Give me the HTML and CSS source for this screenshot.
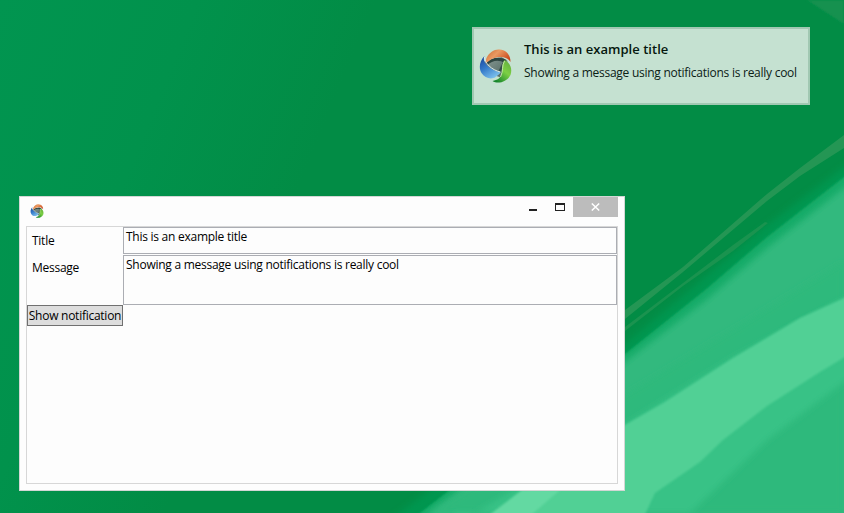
FILE: index.html
```html
<!DOCTYPE html>
<html lang="en">
<head>
<meta charset="utf-8">
<title>Notifications</title>
<link rel="stylesheet" href="styles.css">
</head>
<body>
<svg width="0" height="0" class="defs" aria-hidden="true">
  <defs>
    <linearGradient id="orange" x1="0" y1="0" x2="1" y2="0.6"><stop offset="0" stop-color="#c9682f"/><stop offset=".45" stop-color="#eb9a62"/><stop offset="1" stop-color="#c8441a"/></linearGradient>
    <linearGradient id="blue" x1="0" y1="0" x2=".6" y2="1"><stop offset="0" stop-color="#173f94"/><stop offset=".5" stop-color="#3278c8"/><stop offset="1" stop-color="#79bdeb"/></linearGradient>
    <linearGradient id="green" x1="1" y1="0" x2=".3" y2="1"><stop offset="0" stop-color="#5fa83c"/><stop offset=".5" stop-color="#7dd044"/><stop offset="1" stop-color="#16862c"/></linearGradient>
    <linearGradient id="core" x1="0" y1="0" x2="1" y2="1"><stop offset="0" stop-color="#8b9c97"/><stop offset="1" stop-color="#4a625c"/></linearGradient>
    <symbol id="logo" viewBox="0 0 32 34">
      <path d="M5 12 22 8 28 12 23 29 17 27 5 17Z" fill="url(#core)"/>
      <path d="M6 14C11 9 20 7 27 11L25 14C19 10 12 12 8 16Z" fill="#2f4541"/>
      <path d="M24 12 22 24 19 22Z" fill="#344d46"/>
      <path d="M7 9C10 3 15 0 20 0.5 27 1 31 6 31 13 28 8 21 7 15 9 11 10 8 13 6 15 6 13 6 11 7 9Z" fill="url(#orange)"/>
      <path d="M5 7C0 12-1 19 2 24 5 29 12 31 16 28 19 26 21 24 21 23 14 22 8 18 6 14 4 12 4 9 5 7Z" fill="url(#blue)"/>
      <path d="M5 8C5 14 12 21 21 23" fill="none" stroke="#dcebed" stroke-width="1"/>
      <path d="M25 11C31 14 33 20 31 26 28 32 19 36 13 32 18 31 21 29 22 25 23 20 22 15 25 11Z" fill="url(#green)"/>
      <path d="M25 12C22 17 24 22 21 28" fill="none" stroke="#cdeab4" stroke-width=".9"/>
    </symbol>
  </defs>
</svg>
<main class="desktop">
  <svg class="wallpaper" viewBox="0 0 844 513" aria-hidden="true">
    <defs>
      <linearGradient id="base" x1="0" y1="0" x2="1" y2=".25"><stop offset="0" stop-color="#019550"/><stop offset=".22" stop-color="#01924c"/><stop offset=".42" stop-color="#028c45"/><stop offset="1" stop-color="#028c45"/></linearGradient>
      <filter id="soft"><feGaussianBlur stdDeviation="3"/></filter>
      <filter id="slight"><feGaussianBlur stdDeviation="1"/></filter>
    </defs>
    <rect width="844" height="513" fill="url(#base)"/>
    <path d="M807 0H844V24Z" fill="#159150" filter="url(#slight)"/>
    <path d="M390 520 625 344 700 281 767 225 860 155V540H390Z" fill="#02964f" filter="url(#soft)"/>
    <path d="M420 513 625 354 705 290 767 237 844 177 860 164V540H400Z" fill="#14ab67" filter="url(#slight)"/>
    <path d="M430 513 625 362 705 301 767 248 844 188 860 176V540H410Z" fill="#32b97e" filter="url(#soft)"/>
    <path d="M430 513 625 395 733 330 844 262V513Z" fill="#2db97b" filter="url(#soft)"/>
    <path d="M455 525 625 425 733 358 860 291V370L767 440 690 513H455Z" fill="#39c286" filter="url(#soft)"/>
    <path d="M480 525 625 425 665 402 733 358 800 318 860 291V348L820 372 767 406 723 440 700 462 655 493 640 525Z" fill="#51d095" filter="url(#slight)"/>
    <path d="M488 516 522 490H560L530 516Z" fill="#64d9a2" filter="url(#slight)"/>
    <path d="M625 310 683 267 767 194 800 168 844 135V148L800 176 767 201 683 272 625 319Z" fill="#249654"/>
    <path d="M625 327 683 283 733 245 765 222 768 223 733 251 683 286 625 331Z" fill="#1a934f"/>
  </svg>

  <section class="toast">
    <svg class="toast-logo"><use href="#logo"/></svg>
    <div class="toast-copy">
      <h2 class="toast-title">This is an example title</h2>
      <p class="toast-text">Showing a message using notifications is really cool</p>
    </div>
  </section>

  <section class="window">
    <header class="titlebar">
      <svg class="app-icon"><use href="#logo"/></svg>
      <div class="controls">
        <span class="control minimize"></span>
        <span class="control maximize"></span>
        <span class="control close"><svg width="9" height="8" viewBox="0 0 9 8"><path d="M.8.5 8.2 7.5M8.2.5.8 7.5" stroke="#fff" stroke-width="1.5"/></svg></span>
      </div>
    </header>
    <form class="form">
      <label class="label">Title</label>
      <div class="field">This is an example title</div>
      <label class="label">Message</label>
      <div class="field message">Showing a message using notifications is really cool</div>
      <button class="show" type="button">Show notification</button>
    </form>
  </section>
</main>
</body>
</html>
```
FILE: styles.css
```css
* { box-sizing: border-box; }
body { margin: 0; overflow: hidden; font: 12px/16px "Open Sans", "Noto Sans", sans-serif; letter-spacing: -0.26px; color: #000; }
.defs { position: absolute; }
.desktop { position: relative; width: 844px; height: 513px; overflow: hidden; background: #028b44; }
.wallpaper { display: block; width: 844px; height: 513px; }

.toast { position: absolute; left: 472px; top: 27px; width: 338px; height: 78px; display: flex; padding: 12px 5px; border: 2px solid #a1c8b2; background: #c5e1d1; white-space: nowrap; }
.toast-logo { width: 33px; height: 34px; margin: 8px 12px 0 0; }
.toast-title { margin: 0; font-size: 13px; line-height: 17px; font-weight: 600; color: #06170e; letter-spacing: 0.03px; }
.toast-text { margin: 7px 0 0; color: #0b2015; }

.window { position: absolute; left: 19px; top: 196px; width: 606px; height: 295px; padding: 0 6px 6px; border: 1px solid #d3d7d5; background: #fdfdfd; display: flex; flex-direction: column; }
.titlebar { height: 29px; display: flex; justify-content: space-between; }
.app-icon { width: 14px; height: 14px; margin: 7px 0 0 4px; }
.controls { display: flex; }
.minimize { width: 8px; height: 2px; margin: 12px 18px 0 0; background: #222; }
.maximize { width: 10px; height: 8px; margin: 6px 8px 0 0; border: 1px solid #222; border-top-width: 2px; }
.close { width: 45px; height: 20px; display: flex; align-items: center; justify-content: center; background: #bcbcbc; }

.form { flex: 1; display: grid; grid-template-columns: 96px 494px; grid-template-rows: 27px 51px 21px; align-content: start; border: 1px solid #d7d7d7; white-space: nowrap; }
.label { padding: 6px 5px 0; }
.field { height: 27px; padding: 1px 2px; border: 1px solid #abadb3; }
.message { height: 50px; margin-top: 1px; }
.show { padding: 0; border: 1px solid #707070; background: #dddddd; font: inherit; letter-spacing: inherit; color: #000; }
```
